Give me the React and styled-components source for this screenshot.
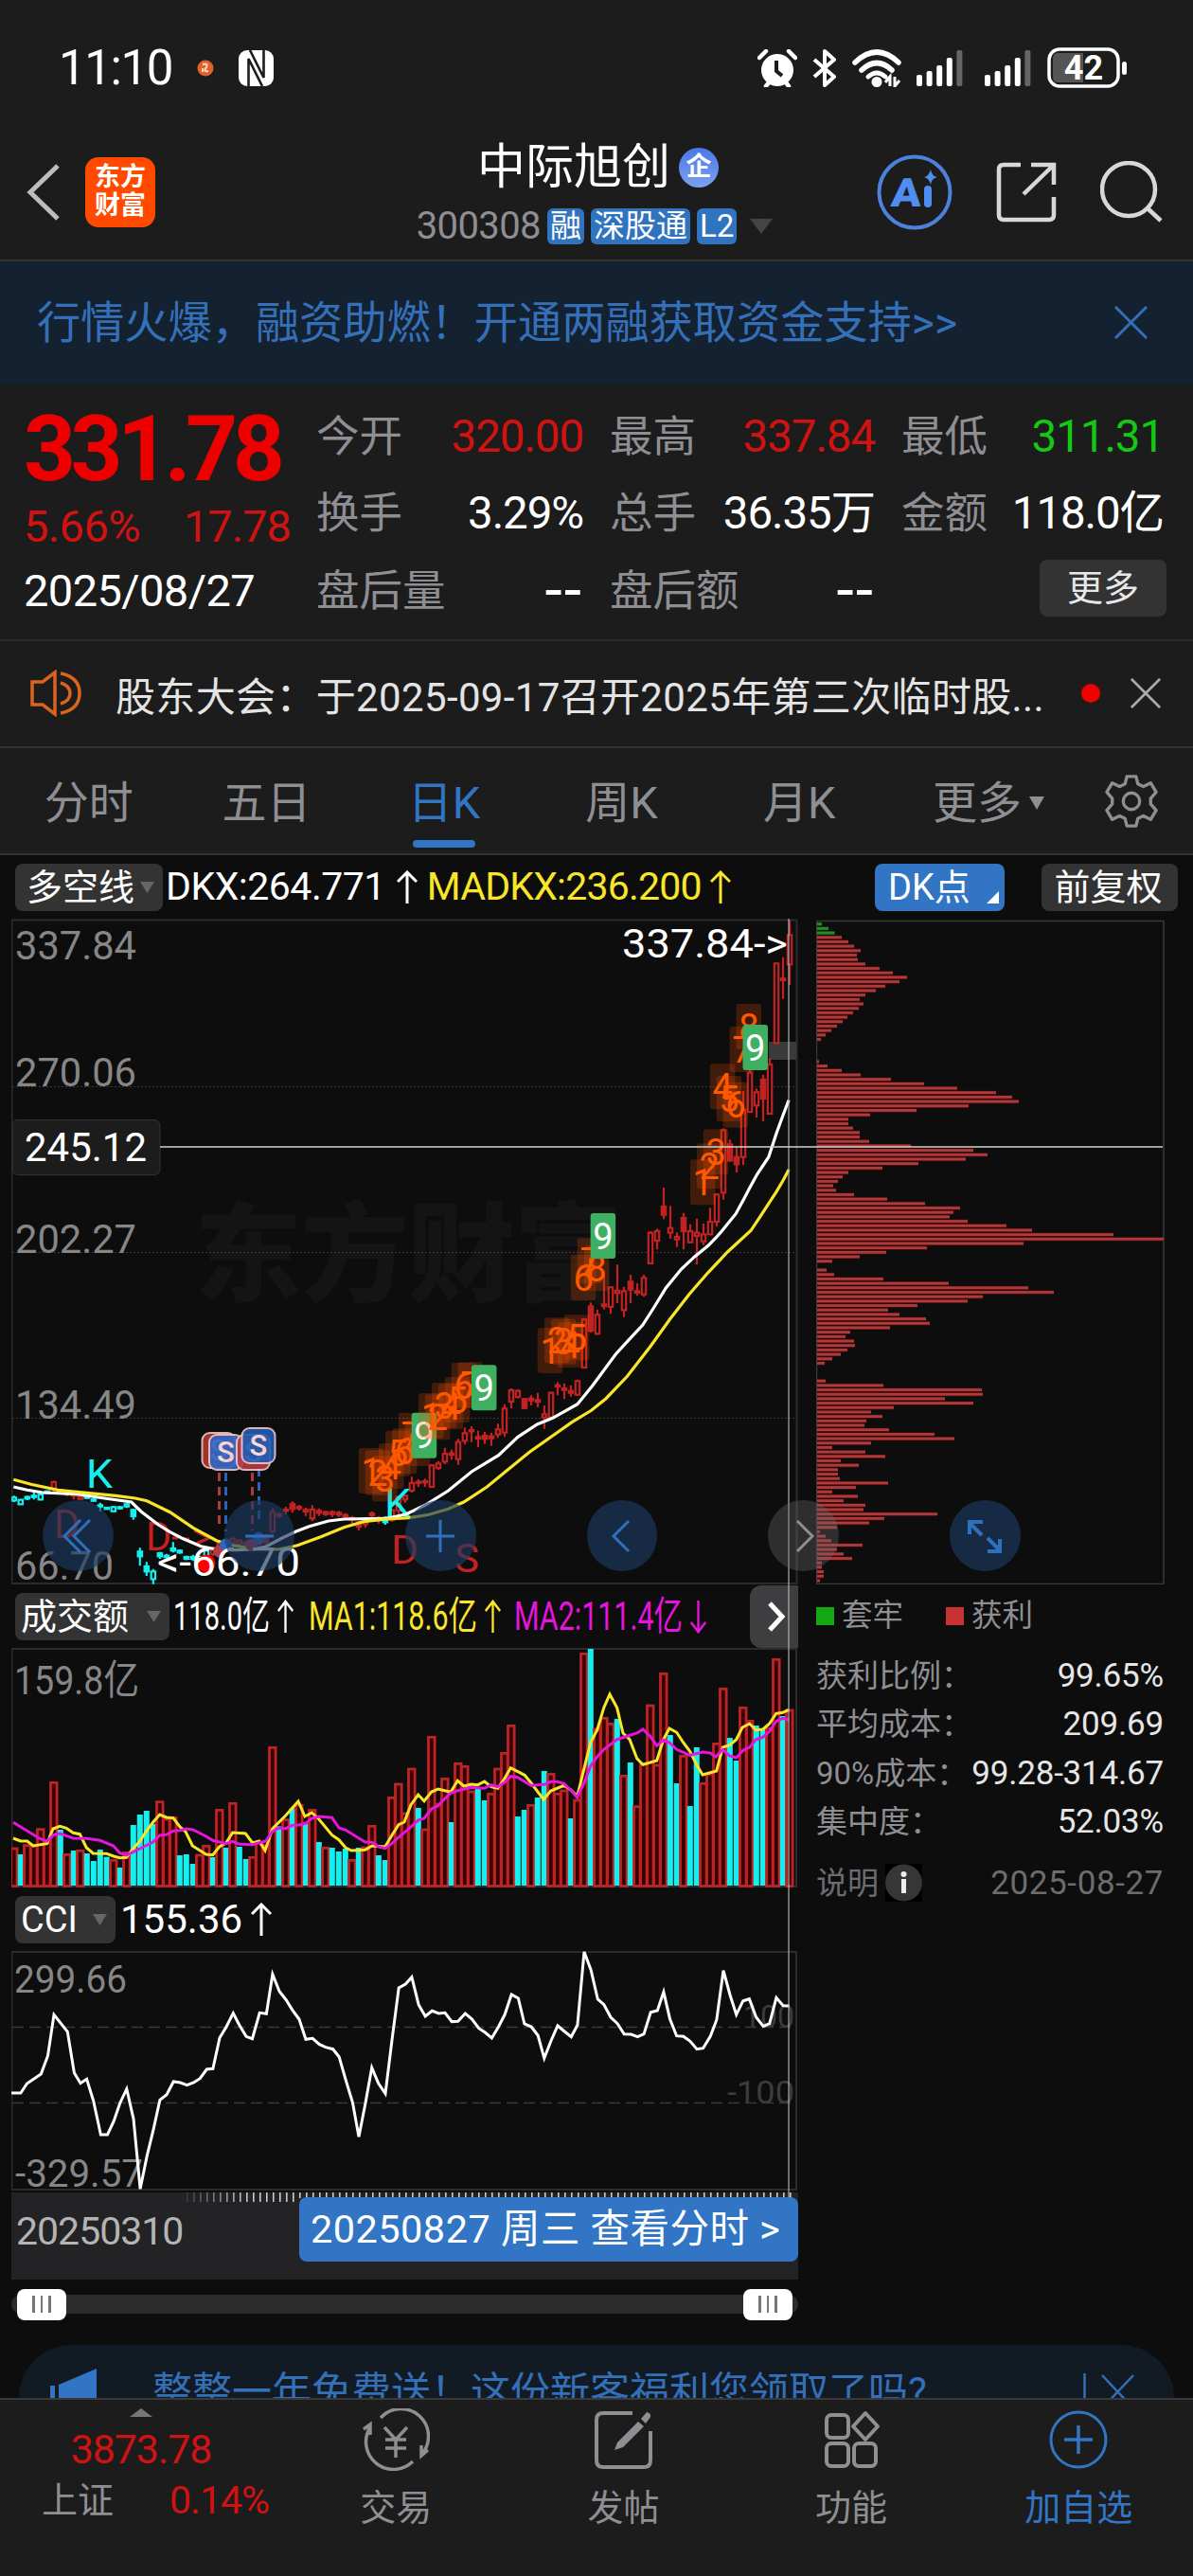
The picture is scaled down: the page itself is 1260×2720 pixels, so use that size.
import React from 'react';
import styled, { createGlobalStyle } from 'styled-components';

const GlobalStyle = createGlobalStyle`
  * { box-sizing: border-box; }
  body {
    margin: 0;
    background: #0d0d0d;
    font-family: Roboto, "Noto Sans CJK SC", sans-serif;
    -webkit-font-smoothing: antialiased;
  }
  svg { display: block; flex: none; }
  svg text { font-family: Roboto, "Noto Sans CJK SC", sans-serif; }
`;

const C = {
  bar: '#1c1c1c', line: '#333335', grey: '#8e8e93', dim: '#868686', red: '#d01212', bright: '#ec0000',
  green: '#14c814', blue: '#3175c4', chip: '#333333', candle: '#c32222', cyan: '#14f0f0',
  yellow: '#fae628', pink: '#e614dc', orange: '#ff5a00',
};

/* ---------- data ---------- */
const chips = [
  5, 12, 18.5, 26, 33, 39, 46, 42, 43, 51, 66, 80, 95, 87, 72, 62, 51, 45, 49, 44, 38, 32, 27, 21, 15, 9, 4, 0, 0, 0, 0,
  2, 11, 26, 46, 78, 113, 148, 189, 206, 213, 160, 105, 56, 33, 33, 38, 45, 45, 55, 99, 165, 180, 157, 107, 69, 33, 27,
  22, 17, 20, 39, 74, 114, 151, 144, 140, 159, 200, 227, 313, 366, 218, 116, 73, 45, 16, 0, 10, 18, 70, 139, 223, 250,
  175, 159, 106, 75, 87, 115, 119, 77, 35, 30, 39, 40, 32, 25, 16, 8, 0, 0, 0, 9, 70, 174, 175, 135, 165, 81, 57, 69,
  52, 50, 76, 124, 145, 57, 16, 51, 72, 25, 44, 22, 22, 24, 75, 41, 16, 43, 28, 51, 49, 127, 71, 55, 21, 3, 9, 15, 48,
  21, 28, 37, 5, 5, 7, 7, 3,
];

const volumes = `R693 C714 R683 R685 R632 R675 R484 C636 R712 C702 R700 C711 C735 C699 C722 R730 C756 R706 C621 C588 C576
C618 R545 R600 R595 C717 C714 C744 R714 R685 C723 R571 C693 R550 C690 C729 R721 R673 R683 R373 C625 R602 C568 R556 C618
R571 C675 R691 C693 C705 C696 R730 C693 R690 R622 C717 C732 R532 R489 R582 R441 C567 R633 R340 R552 R472 C612 R424 R433
R513 C507 C543 R520 R441 R391 R304 C594 C573 R556 C534 C450 R457 R520 R510 C600 R540 R76 C63 R315 R280 R298 C285 R463
C423 R560 R425 R240 R429 R139 C336 C489 R400 C561 C375 R487 R457 R361 R187 C345 C417 R247 R289 C306 C318 R312 R94 C276
R255`.split(/\s+/).map((s) => ({ up: s[0] === 'R', top: 1720 + Number(s.slice(1)) / 3 }));

/* "x,y x,y" text to svg points, with a scale and an origin */
const scale = (text, ox, sx, oy, sy) =>
  text.trim().split(/\s+/).map((p) => {
    const [x, y] = p.split(',').map(Number);
    return `${(ox + x / sx).toFixed(1)},${(oy + y / sy).toFixed(1)}`;
  }).join(' ');

const volMa1 = [
  scale(`42,663 65,672 86,672 105,687 149,680 168,633 190,625 210,631 232,646 253,650 274,693 295,711 338,712 360,720
380,725 401,724 422,695 443,673 464,640 485,612 506,588 527,597 549,599 570,627 588,642 610,687 653,714 674,716 695,690
716,678 737,645 778,648 800,678 821,672 840,702 863,633 905,591 945,546 966,594 988,582 1010,602 1052,653 1074,668
1095,693 1114,702 1157,700 1179,687 1220,690 1241,655 1263,620 1281,612 1302,557`, 0, 3, 1720, 3),
  scale(`35,525 54,545 77,516 98,507 138,517 160,481 180,498 203,492 224,494 245,483 266,500 287,505 308,475 328,440
372,463 392,487 432,540 455,513 497,496 518,510 539,530 560,445 581,360 602,320 623,250 642,207 665,250 684,330 705,350
728,410 747,430 791,417 812,350 831,315 854,328 875,360 896,388 917,430 936,462 980,450 1000,375 1022,368 1043,350
1062,312 1085,300 1105,320 1127,318 1148,300 1169,268 1190,265 1209,256`, 430, 3, 1720, 3),
].join(' ');

const volMa2 = [
  scale(`42,613 86,640 128,665 149,672 170,652 190,648 232,663 275,664 317,670 359,687 380,710 401,717 422,706 443,696
485,675 506,654 527,652 549,640 570,638 591,633 611,636 653,657 674,670 716,680 737,673 759,682 800,683 842,672 863,642
884,630 905,632 926,622 947,621 968,616 988,600 1010,594 1052,598 1074,630 1095,637 1157,675 1179,676 1200,690 1220,695
1241,680 1263,660 1304,625`, 0, 3, 1720, 3),
  scale(`35,606 54,600 77,570 98,560 119,538 138,520 161,512 203,502 245,505 266,494 287,500 308,487 328,467 350,470
392,496 434,493 455,484 476,484 497,490 518,510 538,533 560,490 581,435 602,405 623,382 665,350 728,330 747,318 770,340
791,370 812,352 831,360 854,382 896,400 936,390 960,393 978,405 1000,382 1022,402 1043,408 1064,385 1085,375 1105,350
1127,343 1148,325 1169,293 1190,283 1209,288`, 430, 3, 1720, 3),
].join(' ');

const cci = scale(`22,630 40,630 52,600 79,570 92,512 104,382 130,436 143,566 155,599 167,586 180,655 194,762 207,762
219,720 231,662 244,617 257,712 270,934 283,830 296,742 308,652 321,635 334,594 347,597 360,605 373,597 385,584 398,555
410,553 423,455 436,420 449,377 461,415 474,451 486,458 500,376 513,379 525,254 538,308 551,335 563,367 576,396 589,460
602,457 615,476 627,485 641,491 653,515 666,590 679,660 691,769 704,660 716,550 729,600 742,632 755,460 768,297 781,285
793,263 806,350 819,387 832,370 845,378 857,376 870,404 882,403 896,378 909,396 922,425 934,438 947,456 960,420 972,382
985,318 998,330 1010,411 1023,420 1036,448 1048,520 1061,465 1074,417 1087,435 1100,452 1112,415 1125,183 1138,240
1151,333 1163,350 1176,390 1189,410 1202,443 1215,444 1228,452 1240,443 1253,374 1266,369 1278,310 1290,395 1303,449
1316,451 1329,466 1342,491 1354,488 1368,450 1380,398 1393,242 1406,320 1418,382 1431,338 1443,332 1456,390 1470,419
1482,410 1495,328 1508,353 1520,354`, 0, 1.8233, 2000, 3);

const dkx = [
  scale(`35,810 70,820 110,828 200,833 270,846 340,858 365,888 410,930 440,953 470,972 520,998 560,1008 610,1010 660,1007
690,998 730,972 765,952 800,935 850,918 890,912 1000,910 1050,897 1100,868 1160,822 1220,762 1290,710 1340,652 1390,612
1430,592 1494,548`, 0, 2.45, 1300, 3),
  scale(`700,490 760,390 795,343 830,297 860,240 890,180 930,120 965,80 1000,45 1020,20`, 340, 2.45, 1300, 3),
  scale(`352,1195 385,1145 405,1100 420,1065 440,1020 470,965 490,890 508,830 522,785`, 620, 2.45, 900, 3),
].join(' ');

const madkx = [
  scale(`35,787 80,802 150,820 230,830 300,838 350,846 380,854 440,890 500,940 560,980 600,995 650,1005 720,1008 770,995
830,968 890,938 940,920 1000,912 1060,908 1110,898 1160,880 1200,858 1260,810 1310,760 1370,700 1430,648 1480,605
1530,568`, 0, 2.45, 1300, 3),
  scale(`735,530 790,460 850,365 900,280 950,200 1000,130 1050,65 1110,-2`, 340, 2.45, 1300, 3),
  scale(`450,1150 490,1075 508,1038 522,1005`, 620, 2.45, 900, 3),
].join(' ');

/* colour, high, open, close, low; a leading "s" is a solid body; the last rows use the upper origin */
const lowCandles = `C838,844,853,858 C848,851,865,867 C838,842,847,852 C828,838,842,850 C832,834,850,853 C822,824,829,832
R790,795,815,832 R817,820,823,827 R820,826,834,840 R826,830,838,850 R836,840,848,852 C836,840,845,848 C846,850,854,858
C860,868,872,888 C873,876,880,882 C870,874,887,890 C871,874,878,882 C860,865,872,877 sC880,883,903,914 sC1003,1015,1030,1060
sC1048,1062,1078,1092 C1070,1078,1102,1118 sC1016,1020,1030,1038 C1022,1028,1032,1045 C985,1005,1012,1018
C1008,1012,1018,1022 C1028,1032,1038,1042 sC1025,1032,1038,1045 C1028,1032,1038,1042 C1008,1012,1030,1036
R1000,1010,1022,1030 R985,990,1005,1025 R975,985,995,1005 R968,975,988,1000 R975,980,990,995 R982,987,995,1000
R982,990,998,1005 R968,975,990,1000 sR960,965,985,992 R878,890,950,956 R890,897,902,908 R873,882,886,897
sR856,864,880,892 R868,873,878,885 R875,883,888,902 R868,882,910,918 R878,886,892,902 R885,890,896,902 R884,890,896,905
R886,892,898,906 R893,899,904,912 R902,908,914,928 sR918,922,936,948 sR905,915,928,938 R888,894,900,908 R902,908,916,926
sC903,908,922,930 R880,884,915,920 R838,842,885,898 R834,838,850,860 R778,798,822,828 R786,794,798,810 R784,792,796,810
R738,742,810,812 R728,736,750,756 R686,705,730,738 R692,704,708,724 R658,668,722,740 R622,640,664,676 R618,630,634,668
R632,652,657,684 sR636,648,658,674 R638,650,656,680 R610,628,644,655 R548,562,638,652 R498,504,540,562 R500,506,525,530
sR528,532,560,564 R520,530,536,552 R512,535,540,558 R552,580,590,626 R508,512,590,596 R478,488,492,520 R482,498,503,532
R488,506,512,524 R470,475,518,522 R275,280,432,434 sR226,238,315,322 R248,265,325,328 R130,232,237,248 R176,178,240,262
R106,188,196,228 R176,190,250,272 sR138,160,185,228 R165,190,195,205 R138,148,200,208`.split(/\s+/);
const highCandles = `R1200,1205,1302,1304 R1192,1200,1230,1258 sR1062,1122,1148,1162 R1120,1190,1205,1224 R1204,1218,1226,1250
sR1142,1158,1200,1258 R1178,1200,1235,1238 R1160,1205,1215,1306 R1176,1210,1232,1244 R1126,1170,1210,1212
R1080,1084,1170,1186 R874,880,1078,1100 sR910,925,976,980 sR932,965,988,1014 R756,815,965,990 R690,698,822,826
R748,760,802,840 sR704,720,780,852 R652,672,828,830 R350,352,604,606 R332,400,405,464 R215,262,355,420`.split(/\s+/);

const parseCandle = (text, base) => {
  const solid = text[0] === 's';
  const body = solid ? text.slice(1) : text;
  const [hi, top, bottom, lo] = body.slice(1).split(',').map((v) => base + Number(v) / 3);
  return { solid, up: body[0] === 'R', hi, top, bottom, lo };
};
const candles = [...lowCandles.map((c) => parseCandle(c, 1300)), ...highCandles.map((c) => parseCandle(c, 900))];

const lowMarks = [
  ['1', 928, 687], ['2', 945, 693], ['3', 963, 712], ['4', 980, 672], ['5', 997, 632], ['6', 1014, 625], ['7', 1031, 575],
  ['8', 1048, 600], ['9', 1065, 575], ['1', 1083, 513], ['2', 1100, 517], ['3', 1117, 480], ['4', 1134, 484],
  ['5', 1151, 462], ['6', 1168, 417], ['7', 1185, 415], ['9', 1220, 424],
  ['1', 1391, 306], ['2', 1409, 274], ['3', 1426, 278], ['4', 1443, 288], ['5', 1460, 265],
  ['6', 1477, 75], ['7', 1494, 22], ['8', 1511, 45], ['9', 1528, -57],
].map(([n, x, y]) => ({ n, x: x / 2.45, y: 1300 + y / 3 }));
const highMarks = [
  ['1', 267, 973], ['2', 284, 922], ['3', 301, 877], ['4', 318, 670], ['5', 335, 708], ['6', 352, 728], ['7', 369, 552],
  ['8', 386, 480], ['9', 403, 546],
].map(([n, x, y]) => ({ n, x: 620 + x / 2.45, y: 900 + y / 3 }));

/* ---------- shared parts ---------- */
const Txt = styled.span`
  font-size: ${(p) => p.$s}px;
  color: ${(p) => p.$c || '#fff'};
  font-weight: ${(p) => p.$w || 400};
  letter-spacing: ${(p) => p.$ls || 0}px;
  margin-left: ${(p) => p.$ml || 0}px;
  line-height: 1;
  white-space: nowrap;
`;

const Cross = ({ size = 35, color, w = 3 }) => (
  <svg width={size} height={size} viewBox="0 0 35 35"><path d="M1 1L34 34M34 1L1 34" stroke={color} strokeWidth={w} fill="none" /></svg>
);
const Arrow = ({ color, down, width = 22 }) => (
  <svg width={width} height="36" viewBox="0 0 22 36" preserveAspectRatio="none">
    <path d={down ? 'M11 1V34M1 24L11 34L21 24' : 'M11 35V2M1 12L11 2L21 12'} stroke={color} strokeWidth="3" fill="none" />
  </svg>
);
const Triangle = ({ w = 15, h = 12, color = '#666', up }) => (
  <svg width={w} height={h} viewBox="0 0 10 10" preserveAspectRatio="none"><path d={up ? 'M0 10H10L5 0Z' : 'M0 0H10L5 10Z'} fill={color} /></svg>
);

/* ---------- top ---------- */
const Screen = styled.div`
  width: 1260px;
  height: 2720px;
  overflow: hidden;
  display: flex;
  flex-direction: column;
  background: #0d0d0d;
`;
const StatusBar = styled.div`
  height: 144px;
  padding: 0 68px 0 62px;
  background: ${C.bar};
  display: flex;
  align-items: center;
  justify-content: space-between;
`;
const StatusGroup = styled.div`
  display: flex;
  align-items: center;
  gap: ${(p) => p.$gap}px;
`;
const Header = styled.header`
  height: 132px;
  padding: 0 32px 0 28px;
  background: ${C.bar};
  border-bottom: 2px solid ${C.line};
  display: grid;
  grid-template-columns: 340px 1fr 340px;
  align-items: center;
`;
const HeaderSide = styled.div`
  display: flex;
  align-items: center;
  justify-content: ${(p) => p.$end ? 'flex-end' : 'flex-start'};
  gap: ${(p) => p.$gap}px;
  padding-bottom: 11px;
`;
const Logo = styled.div`
  width: 74px;
  height: 74px;
  border-radius: 14px;
  background: #ff4a00;
  color: #fff;
  font-size: 27px;
  font-weight: 700;
  line-height: 30px;
  text-align: center;
  padding-top: 6px;
`;
const TitleBlock = styled.div`
  display: flex;
  flex-direction: column;
  align-items: center;
  gap: 16px;
  padding-bottom: 12px;
  margin-top: 4px;
`;
const TitleRow = styled.div`
  display: flex;
  align-items: center;
  height: ${(p) => p.$h}px;
  gap: ${(p) => p.$gap}px;
  padding-left: ${(p) => p.$pl || 0}px;
`;
const CompanyBadge = styled.span`
  width: 42px;
  height: 42px;
  border-radius: 50%;
  background: linear-gradient(#4a78e8, #7ba1ef);
  color: #fff;
  font-size: 27px;
  font-weight: 700;
  line-height: 40px;
  text-align: center;
`;
const Tag = styled.span`
  height: 38px;
  padding: 0 3px;
  border-radius: 6px;
  background: #3074bf;
  color: #fff;
  font-size: 33px;
  line-height: 37px;
`;
const Promo = styled.div`
  height: 130px;
  padding: 0 48px 0 39px;
  background: #142130;
  display: flex;
  align-items: center;
  justify-content: space-between;
`;
const Quote = styled.section`
  height: 271px;
  padding: 20px 29px 0 25px;
  background: ${C.bar};
  border-bottom: 2px solid #2a2a2c;
  display: grid;
  grid-template-columns: 309px 1fr;
`;
const PriceCol = styled.div`
  display: flex;
  flex-direction: column;
`;
const PriceLine = styled.div`
  height: ${(p) => p.$h}px;
  width: 282px;
  display: flex;
  align-items: center;
  justify-content: space-between;
`;
const StatGrid = styled.div`
  display: grid;
  grid-template-columns: 282px 280px 277px;
  column-gap: 28px;
  grid-auto-rows: 81.5px;
  margin-top: -5px;
`;
const Stat = styled.div`
  display: flex;
  align-items: center;
  justify-content: ${(p) => p.$end ? 'flex-end' : 'space-between'};
`;
const MoreButton = styled.button`
  width: 134px;
  height: 60px;
  margin: -7px -3px 0 0;
  border: 0;
  border-radius: 8px;
  background: ${C.chip};
  color: #e8e8e8;
  font: 400 38px/56px Roboto, "Noto Sans CJK SC", sans-serif;
  padding: 0;
`;
const News = styled.div`
  height: 114px;
  padding: 0 34px 0 32px;
  background: ${C.bar};
  border-bottom: 2px solid ${C.line};
  display: flex;
  align-items: center;
`;
const NewsText = styled.span`
  flex: 1;
  margin-left: 35px;
  font-size: 42px;
  letter-spacing: 0.35px;
  color: #e4e4e4;
  white-space: nowrap;
`;
const Dot = styled.i`
  width: 20px;
  height: 20px;
  border-radius: 50%;
  background: #f00000;
  margin-right: 32px;
`;
const Tabs = styled.nav`
  height: 113px;
  background: ${C.bar};
  border-bottom: 2px solid ${C.line};
  display: flex;
`;
const Tab = styled.div`
  width: ${(p) => p.$w || 187.6}px;
  padding-top: 6px;
  display: flex;
  flex-direction: column;
  align-items: center;
  font-size: 47px;
  line-height: 104px;
  color: ${(p) => p.$on ? C.blue : C.grey};
  &::after {
    content: '';
    width: 66px;
    height: 8px;
    margin-top: -13px;
    border-radius: 4px;
    background: ${(p) => p.$on ? C.blue : 'transparent'};
  }
`;
const TabLabel = styled.div`
  display: flex;
  align-items: center;
  gap: 8px;
  height: 104px;
`;
const GearCell = styled.div`
  flex: 1;
  display: flex;
  align-items: center;
  justify-content: center;
  padding-right: 20px;
`;

/* ---------- charts ---------- */
const ChartArea = styled.main`
  position: relative;
  height: 1630px;
  display: flex;
  flex-direction: column;
`;
const Indicators = styled.div`
  height: 67px;
  padding: 0 16px;
  display: flex;
  align-items: center;
`;
const Chip = styled.div`
  width: ${(p) => p.$w}px;
  height: 50px;
  padding: 0 9px 0 ${(p) => p.$pl || 6}px;
  border-radius: 8px;
  background: ${(p) => p.$bg || C.chip};
  color: #fff;
  font-size: 38px;
  line-height: 48px;
  display: flex;
  align-items: center;
  justify-content: ${(p) => p.$mid ? 'center' : 'space-between'};
  margin-left: ${(p) => p.$ml || 0}px;
  white-space: nowrap;
`;
const IndicatorValue = styled.div`
  display: flex;
  align-items: center;
  gap: ${(p) => p.$gap || 12}px;
  margin-left: ${(p) => p.$ml}px;
`;
const Spacer = styled.div`flex: 1;`;
const Corner = styled.svg`align-self: flex-end; margin: 0 -3px 8px 0;`;
const Columns = styled.div`
  display: grid;
  grid-template-columns: 831px 367px;
  column-gap: 19px;
  padding-left: 12px;
`;
const Column = styled.div`
  display: flex;
  flex-direction: column;
`;
const SubHeader = styled.div`
  height: ${(p) => p.$h}px;
  padding-left: ${(p) => p.$pl}px;
  display: flex;
  align-items: center;
`;
const Squeeze = styled.div`
  width: ${(p) => p.$w}px;
  margin-left: ${(p) => p.$ml}px;
  display: flex;
  align-items: center;
`;
const NextButton = styled.div`
  width: 51px;
  height: 66px;
  margin-left: auto;
  border-radius: 12px 0 0 12px;
  background: #3e3e40;
  display: flex;
  align-items: center;
  justify-content: center;
  padding-left: 4px;
`;
const DateBar = styled.div`
  height: 92px;
  margin-top: 2px;
  background: #232326;
  display: flex;
  flex-direction: column;
`;
const DateRow = styled.div`
  display: flex;
  justify-content: space-between;
  align-items: center;
  padding-left: 5px;
`;
const DateButton = styled.div`
  width: 527px;
  height: 68px;
  margin-top: -5px;
  border-radius: 8px;
  background: ${C.blue};
  color: #fff;
  font-size: 41.5px;
  line-height: 67px;
  letter-spacing: 0.45px;
  padding-left: 12px;
  white-space: pre;
`;
const Slider = styled.div`
  height: 20px;
  margin-top: 16px;
  border-radius: 10px;
  background: #2c2c2e;
  display: flex;
  align-items: center;
  justify-content: space-between;
  padding: 0 6px;
`;
const Handle = styled.div`
  width: 52px;
  height: 33px;
  border-radius: 8px;
  background: #fff;
  display: flex;
  align-items: center;
  justify-content: center;
  gap: 6px;
  i { width: 2.5px; height: 18px; background: #777; }
`;
const Legend = styled.div`
  height: 66px;
  margin-bottom: 4px;
  display: flex;
  align-items: center;
`;
const Swatch = styled.i`
  width: 19px;
  height: 19px;
  background: ${(p) => p.$c};
  margin: 0 8px 0 ${(p) => p.$ml || 0}px;
`;
const InfoRow = styled.div`
  height: 51.5px;
  margin-top: ${(p) => p.$mt || 0}px;
  display: flex;
  align-items: center;
  justify-content: space-between;
`;
const InfoGroup = styled.div`
  display: flex;
  align-items: center;
  gap: 7px;
`;
const CrossV = styled.div`
  position: absolute;
  left: 832px;
  top: 67px;
  width: 2px;
  height: 1350px;
  background: rgba(190, 190, 190, 0.55);
`;
const CrossH = styled.div`
  position: absolute;
  left: 169px;
  top: 307px;
  width: 1059px;
  height: 1.5px;
  background: rgba(210, 210, 210, 0.75);
`;
const Controls = styled.div`
  position: absolute;
  left: 45px;
  top: 681px;
  display: flex;
  gap: 117px;
`;
const RoundButton = styled.div`
  width: 74.6px;
  height: 74.6px;
  border-radius: 50%;
  background: ${(p) => p.$off ? 'rgba(110,110,110,0.35)' : 'rgba(28,58,95,0.66)'};
  display: flex;
  align-items: center;
  justify-content: center;
`;
const Offer = styled.div`
  position: absolute;
  left: 20px;
  right: 20px;
  top: 1573px;
  height: 100px;
  border-radius: 56px 56px 0 0;
  background: #121a23;
  padding: 0 41px 0 32px;
  display: flex;
  align-items: center;
`;

/* ---------- bottom ---------- */
const BottomBar = styled.footer`
  position: relative;
  height: 188px;
  border-top: 2px solid #3a3a3c;
  background: ${C.bar};
  display: flex;
`;
const IndexCell = styled.div`
  width: 298px;
  padding-top: 9px;
  display: flex;
  flex-direction: column;
  align-items: center;
`;
const IndexRow = styled.div`
  width: 298px;
  height: 54px;
  margin-top: ${(p) => p.$mt || 0}px;
  padding: ${(p) => p.$mid ? '0' : '0 14px 0 44px'};
  display: flex;
  align-items: center;
  justify-content: ${(p) => p.$mid ? 'center' : 'space-between'};
`;
const NavItem = styled.div`
  width: 240.4px;
  padding-top: 9px;
  display: flex;
  flex-direction: column;
  align-items: center;
  gap: 20px;
`;

/* ---------- drawings ---------- */
const Signal = () => (
  <svg width="50" height="40" viewBox="0 0 50 40">
    {[0, 1, 2, 3, 4].map((i) => <rect key={i} x={i * 10.6} y={[27, 23, 17, 9, 1][i]} width="6" height={[12, 16, 22, 30, 38][i]} rx="2" fill={i === 4 ? '#666' : '#fff'} />)}
  </svg>
);

const Ax = ({ x, y, w, children, fill = C.dim, size = 43, anchor }) => (
  <text x={x} y={y} fontSize={size} fill={fill} textLength={w} lengthAdjust="spacingAndGlyphs" textAnchor={anchor}>{children}</text>
);

const Badge = ({ x, y, fill }) => (
  <g opacity="0.9">
    <rect x={x} y={y} width="35" height="37" rx="8" fill={fill} stroke="#f0c8c8" strokeWidth="2" />
    <text x={x + 17.5} y={y + 29} fontSize="31" fontWeight="500" fill="#ffe0e0" textAnchor="middle">S</text>
  </g>
);

const Marks = ({ list }) => list.map((m, i) => (
  <g key={i}>
    <rect x={m.x} y={m.y} width="26.5" height="48" rx="3" fill={m.n === '9' ? '#3faf61' : 'rgba(255,80,0,0.22)'} />
    <text x={m.x + 13.3} y={m.y + 37.5} fontSize="38" fill={m.n === '9' ? '#fff' : C.orange} textAnchor="middle">{m.n}</text>
  </g>
));

const PriceChart = () => (
  <svg width="831" height="703" viewBox="12 970 831 703">
    <text x="205" y="1365" fontSize="114" fontWeight="900" fill="#141414" textLength="452">东方财富</text>
    <g stroke="#3a3a3a" strokeDasharray="2 2">
      <path d="M13 1147.5H841M13 1322.5H841M13 1497.5H841" />
    </g>
    <path d="M12.5 1672V971.5H841.5V1672Z" fill="none" stroke="#2c2c2e" strokeWidth="2" />
    <Ax x={16} y={1013} w={128}>337.84</Ax>
    <Ax x={16} y={1147} w={128}>270.06</Ax>
    <Ax x={16} y={1323} w={128}>202.27</Ax>
    <Ax x={16} y={1498} w={128}>134.49</Ax>
    <Ax x={16} y={1668} w={104}>66.70</Ax>
    <rect x="13" y="1182.500" width="156" height="58" rx="6" fill="#1c1c1d" stroke="#333" />
    <Ax x={26} y={1226} w={129} fill="#fff">245.12</Ax>
    <rect x="812" y="1100" width="29" height="19" fill="#3a3a3a" />
    {candles.map((c, i) => {
      const x = 14.8 + i * 7.002;
      const color = c.up ? C.candle : C.cyan;
      return (
        <g key={i} stroke={color} strokeWidth="2.200">
          <path d={`M${x} ${c.hi}V${c.top}M${x} ${c.bottom}V${c.lo}`} />
          <rect x={x - 2.2} y={c.top} width="4.4" height={Math.max(c.bottom - c.top, 1)} fill={c.solid ? color : '#0d0d0d'} />
        </g>
      );
    })}
    <Ax x={57} y={1624} w={27} fill={C.candle}>D</Ax>
    <Ax x={154} y={1637} w={27} fill={C.candle}>D</Ax>
    <path d="M182 1624H188M193 1625H200M205 1616L221 1624L207 1630" stroke={C.candle} strokeWidth="3" fill="none" />
    <Ax x={91} y={1571} w={28} fill={C.cyan}>K</Ax>
    <Ax x={406} y={1602} w={28} fill={C.cyan}>K</Ax>
    <Ax x={413} y={1651} w={29} fill={C.candle}>D</Ax>
    <Ax x={480} y={1660} w={26} fill={C.candle}>S</Ax>
    <Marks list={lowMarks} />
    <Marks list={highMarks} />
    <polyline points={dkx} fill="none" stroke="#fff" strokeWidth="3.200" />
    <polyline points={madkx} fill="none" stroke={C.yellow} strokeWidth="3.200" />
    <g strokeWidth="3" strokeDasharray="9 6">
      <path d="M231.500 1555V1613M266.500 1555V1616" stroke="#b03a3a" />
      <path d="M238.500 1555V1617M273.500 1550V1608" stroke="#2b62b8" />
    </g>
    <Badge x={213.500} y={1513} fill="#b03a30" />
    <Badge x={221} y={1515} fill="#2f66c4" />
    <Badge x={250} y={1515} fill="#b83a44" />
    <Badge x={255.500} y={1508} fill="#1f5cb4" />
    <circle cx="218" cy="1651" r="9.500" fill="#f00" />
    <circle cx="231.500" cy="1638" r="6.500" fill="#b43a44" />
    <circle cx="238.500" cy="1631" r="6.500" fill="#2f66c4" />
    <circle cx="265.500" cy="1631" r="6.500" fill="#b43a44" />
    <circle cx="273" cy="1624" r="6.500" fill="#2f66c4" />
    <Ax x={166} y={1664} w={151} fill="#fff">&lt;-66.70</Ax>
    <Ax x={657} y={1011} w={175} fill="#fff">337.84-&gt;</Ax>
  </svg>
);

const ChipChart = () => (
  <svg width="368" height="703" viewBox="861 970 368 703">
    <path d="M861.500 972.500H1228V1672.500H861.500Z" fill="none" stroke="#3a3a3c" strokeWidth="1.500" />
    {chips.map((w, i) => w > 0 && (
      <g key={i}>
        <rect x="862" y={973.8 + i * 4.684} width={w} height="4" fill={i < 3 ? '#103c10' : '#5c0c0c'} />
        <rect x="862" y={974.3 + i * 4.684} width={w} height="2.800" fill={i < 3 ? '#249024' : '#ad3b3b'} />
      </g>
    ))}
  </svg>
);

const VolumeChart = () => (
  <svg width="831" height="253" viewBox="12 1740 831 253">
    <path d="M12.500 1992V1741H841V1992Z" fill="none" stroke="#2c2c2e" strokeWidth="2" />
    <Ax x={15} y={1789} w={132}>159.8亿</Ax>
    {volumes.map((v, i) => {
      const x = 14.8 + i * 7;
      return v.up
        ? <rect key={i} x={x - 3.3} y={v.top + 1} width="6.600" height={1990.5 - v.top} fill="#380000" stroke="#bb2525" strokeWidth="2.800" />
        : <rect key={i} x={x - 3} y={v.top} width="6" height={1991 - v.top} fill="#14f0f0" />;
    })}
    <polyline points={volMa1} fill="none" stroke={C.yellow} strokeWidth="3" />
    <polyline points={volMa2} fill="none" stroke={C.pink} strokeWidth="3" />
  </svg>
);

const CciChart = () => (
  <svg width="831" height="253" viewBox="12 2060 831 253">
    <path d="M12.500 2312V2061H841V2312Z" fill="none" stroke="#2c2c2e" strokeWidth="2" />
    <path d="M13 2140.500H835M13 2220.500H835" stroke="#383838" strokeWidth="1.500" strokeDasharray="12 6" />
    <Ax x={15} y={2104} w={119} size={40}>299.66</Ax>
    <Ax x={16} y={2308.5} w={135} size={40}>-329.57</Ax>
    <Ax x={839} y={2141} w={54} size={34} fill="#3c3c3c" anchor="end">100</Ax>
    <Ax x={839} y={2221} w={71} size={34} fill="#3c3c3c" anchor="end">-100</Ax>
    <polyline points={cci} fill="none" stroke="#fff" strokeWidth="3" />
  </svg>
);

const Ticks = () => (
  <svg width="831" height="10" viewBox="12 2315 831 10" overflow="visible">
    {Array.from({ length: 92 }, (_, i) => (
      <rect key={i} x={197 + i * 7} y="2315" width="1.600" height={i < 17 ? 10 : 6} fill="#ddd" opacity={Math.min(0.15 + i * 0.08, 0.9)} />
    ))}
  </svg>
);

export default function App() {
  return (
    <>
      <GlobalStyle />
      <Screen>
        <StatusBar>
          <StatusGroup $gap={26}>
            <Txt $s={51} $ls={-1.4}>11:10</Txt>
            <svg width="18" height="18" viewBox="0 0 18 18"><circle cx="9" cy="9" r="8.500" fill="#e0622a" /><path d="M6 5Q12 3 10 8Q6 13 12 12M6 9V13" stroke="#ffd9c4" strokeWidth="2" fill="none" /></svg>
            <svg width="37" height="38" viewBox="0 0 37 38">
              <rect width="37" height="38" rx="9" fill="#fff" />
              <path d="M10.500 38V9L25 38M26.500 0V29L12 0" stroke={C.bar} strokeWidth="2.600" fill="none" />
            </svg>
          </StatusGroup>
          <StatusGroup $gap={16}>
            <svg width="42" height="40" viewBox="0 0 42 40">
              <circle cx="21" cy="22" r="17" fill="#fff" /><path d="M2 9L9 2M40 9L33 2M9 39L13 34M33 39L29 34" stroke="#fff" strokeWidth="4.500" strokeLinecap="round" /><path d="M20 12V23L26 28" stroke={C.bar} strokeWidth="4" fill="none" />
            </svg>
            <svg width="26" height="40" viewBox="0 0 26 40"><path d="M2 11L23 29L13 38V2L23 11L2 29" fill="none" stroke="#fff" strokeWidth="4" strokeLinejoin="round" /></svg>
            <svg width="52" height="40" viewBox="0 0 52 40">
              <path d="M3 14Q26 -8 49 14M10 22Q26 7 42 22" fill="none" stroke="#fff" strokeWidth="5.500" strokeLinecap="round" /><path d="M17 29Q26 21 35 29" fill="none" stroke="#fff" strokeWidth="5" strokeLinecap="round" /><circle cx="26" cy="34.500" r="5.500" fill="#fff" /><path d="M40 39V29L35 35M45 29V39L50 33" fill="none" stroke="#fff" strokeWidth="3" />
            </svg>
            <StatusGroup $gap={22}><Signal /><Signal /></StatusGroup>
            <svg width="86" height="44" viewBox="0 0 86 44">
              <rect x="2" y="2" width="73" height="39" rx="11" fill="none" stroke="#fff" strokeWidth="3.500" />
              <path d="M11 6H38V37H11Q6 37 6 31V12Q6 6 11 6Z" fill="#555" /><rect x="79" y="15" width="5" height="14" rx="2.500" fill="#fff" />
              <text x="38.500" y="34" fontSize="36" fontWeight="700" fill="#fff" textAnchor="middle">42</text>
            </svg>
          </StatusGroup>
        </StatusBar>

        <Header>
          <HeaderSide $gap={27}>
            <svg width="35" height="60" viewBox="0 0 35 60"><path d="M33 2L4 30L33 58" fill="none" stroke="#bdbdbd" strokeWidth="5" /></svg>
            <Logo>东方<br />财富</Logo>
          </HeaderSide>
          <TitleBlock>
            <TitleRow $h={52} $gap={9} $pl={7}>
              <Txt $s={51}>中际旭创</Txt>
              <CompanyBadge>企</CompanyBadge>
            </TitleRow>
            <TitleRow $h={40} $gap={7}>
              <Txt $s={40} $c={C.grey} $ls={-0.6}>300308</Txt>
              <Tag>融</Tag><Tag>深股通</Tag><Tag>L2</Tag>
              <Spacer />
              <Triangle w={24} h={16} color="#444" />
            </TitleRow>
          </TitleBlock>
          <HeaderSide $end $gap={46}>
            <svg width="80" height="80" viewBox="0 0 80 80">
              <circle cx="40" cy="40" r="37.500" fill="none" stroke="#4c82dc" strokeWidth="4" />
              <text x="15" y="55" fontSize="42" fontWeight="900" fill="#4f8df0" textLength="32" lengthAdjust="spacingAndGlyphs" transform="skewX(-4) translate(3 0)">A</text>
              <path d="M54 37V52" stroke="#4f8df0" strokeWidth="8" strokeLinecap="round" /><path d="M57 16Q58 23 64 24Q58 25 57 32Q55 25 50 24Q55 23 57 16Z" fill="#4f8df0" />
            </svg>
            <svg width="64" height="64" viewBox="0 0 64 64"><path d="M26 3H8Q3 3 3 8V56Q3 61 8 61H56Q61 61 61 56V37M37 3H61V24M61 3L29 34" fill="none" stroke="#d8d8d8" strokeWidth="4.500" /></svg>
            <svg width="66" height="66" viewBox="0 0 66 66"><circle cx="30" cy="30" r="28" fill="none" stroke="#d8d8d8" strokeWidth="4.500" /><path d="M50 50L64 63" stroke="#d8d8d8" strokeWidth="4.500" /></svg>
          </HeaderSide>
        </Header>

        <Promo>
          <Txt $s={46.2} $c="#3470b8">行情火爆，融资助燃！开通两融获取资金支持&gt;&gt;</Txt>
          <Cross color="#3470b8" />
        </Promo>

        <Quote>
          <PriceCol>
            <PriceLine $h={96}><Txt $s={96} $w={700} $c={C.bright} $ls={-5.5}>331.78</Txt></PriceLine>
            <PriceLine $h={68}><Txt $s={47} $c={C.red} $ls={-0.6}>5.66%</Txt><Txt $s={47} $c={C.red} $ls={-1}>17.78</Txt></PriceLine>
            <PriceLine $h={68}><Txt $s={47} $ls={-0.6}>2025/08/27</Txt></PriceLine>
          </PriceCol>
          <StatGrid>
            {[
              ['今开', '320.00', C.red], ['最高', '337.84', C.red], ['最低', '311.31', C.green],
              ['换手', '3.29%'], ['总手', '36.35万'], ['金额', '118.0亿'],
              ['盘后量', '--'], ['盘后额', '--'],
            ].map(([label, value, color]) => (
              <Stat key={label}>
                <Txt $s={45.5} $c={C.grey}>{label}</Txt>
                <Txt $s={value === '--' ? 66 : 47.5} $c={color} $ls={value === '--' ? 2 : -1.1}>{value}</Txt>
              </Stat>
            ))}
            <Stat $end><MoreButton>更多</MoreButton></Stat>
          </StatGrid>
        </Quote>

        <News>
          <svg width="55" height="50" viewBox="0 0 55 50"><path d="M2 13H13L26 3V47L13 37H2ZM32 4Q52 8 52 25Q52 42 32 46M32 14Q42 17 42 25Q42 33 32 36" fill="none" stroke="#d8641e" strokeWidth="3.500" /></svg>
          <NewsText>股东大会：于2025-09-17召开2025年第三次临时股...</NewsText>
          <Dot />
          <Cross size={32} color="#aaa" />
        </News>

        <Tabs>
          <Tab>分时</Tab><Tab>五日</Tab><Tab $on>日K</Tab><Tab>周K</Tab><Tab>月K</Tab>
          <Tab $w={212}><TabLabel>更多<Triangle w={16} h={14} color={C.grey} /></TabLabel></Tab>
          <GearCell>
            <svg width="56" height="56" viewBox="0 0 58 58">
              <path d="M24 2H34L36 10L42 13L50 9L56 19L50 26V32L56 39L50 49L42 45L36 48L34 56H24L22 48L16 45L8 49L2 39L8 32V26L2 19L8 9L16 13L22 10Z" fill="none" stroke={C.grey} strokeWidth="3.500" strokeLinejoin="round" />
              <circle cx="29" cy="29" r="9" fill="none" stroke={C.grey} strokeWidth="3.500" />
            </svg>
          </GearCell>
        </Tabs>

        <ChartArea>
          <Indicators>
            <Chip $w={156} $pl={12}>多空线<Triangle /></Chip>
            <IndicatorValue $ml={3}><Txt $s={41} $ls={-0.5}>DKX:264.771</Txt><Arrow color="#fff" /></IndicatorValue>
            <IndicatorValue $ml={10} $gap={9}><Txt $s={41} $c={C.yellow} $ls={-0.8}>MADKX:236.200</Txt><Arrow color={C.yellow} /></IndicatorValue>
            <Spacer />
            <Chip $w={137} $bg={C.blue} $pl={14}>DK点<Corner width="13" height="13" viewBox="0 0 13 13"><path d="M13 0V13H0Z" fill="#fff" /></Corner></Chip>
            <Chip $w={144} $mid $ml={39}>前复权</Chip>
          </Indicators>

          <Columns>
            <Column>
              <PriceChart />
              <SubHeader $h={67} $pl={4}>
                <Chip $w={163}>成交额<Triangle /></Chip>
                {[['118.0亿', '#fff', 128, 98, 4], ['MA1:118.6亿', C.yellow, 202, 174, 15], ['MA2:111.4亿', C.pink, 200, 174, 15]].map(([t, c, w, tw, ml]) => (
                  <Squeeze key={t} $w={w} $ml={ml}>
                    <svg width={tw + 12} height="50" viewBox={`0 0 ${tw + 12} 50`}><text x="0" y="39" fontSize="42" fill={c} textLength={tw + 4} lengthAdjust="spacingAndGlyphs">{t}</text></svg>
                    <Arrow color={c} down={c === C.pink} width={17} />
                  </Squeeze>
                ))}
                <NextButton><svg width="18" height="32" viewBox="0 0 18 32"><path d="M2 2L15 16L2 30" fill="none" stroke="#fff" strokeWidth="5" /></svg></NextButton>
              </SubHeader>
              <VolumeChart />
              <SubHeader $h={67} $pl={4}>
                <Chip $w={106}>CCI<Triangle /></Chip>
                <IndicatorValue $ml={5} $gap={9}><Txt $s={42}>155.36</Txt><Arrow color="#fff" /></IndicatorValue>
              </SubHeader>
              <CciChart />
              <DateBar>
                <Ticks />
                <DateRow><Txt $s={41} $c="#b4b4b4" $ls={-1}>20250310</Txt><DateButton>20250827 周三 查看分时 &gt;</DateButton></DateRow>
              </DateBar>
              <Slider><Handle><i /><i /><i /></Handle><Handle><i /><i /><i /></Handle></Slider>
            </Column>
            <Column>
              <ChipChart />
              <Legend>
                <Swatch $c="#14a814" /><Txt $s={32.5} $c={C.grey}>套牢</Txt>
                <Swatch $c="#c83232" $ml={45} /><Txt $s={32.5} $c={C.grey}>获利</Txt>
              </Legend>
              {[['获利比例：', '99.65%'], ['平均成本：', '209.69'], ['90%成本：', '99.28-314.67'], ['集中度：', '52.03%']].map(([k, v]) => (
                <InfoRow key={k}><Txt $s={33} $c={C.grey}>{k}</Txt><Txt $s={35} $c="#e6e6e6" $ls={-0.2}>{v}</Txt></InfoRow>
              ))}
              <InfoRow $mt={13}>
                <InfoGroup>
                  <Txt $s={33} $c="#6c6c70">说明</Txt>
                  <svg width="39" height="40" viewBox="0 0 39 40"><rect width="39" height="40" fill="#000" /><circle cx="19.500" cy="20" r="19.500" fill="#363636" /><path d="M19.500 16V31" stroke="#eee" strokeWidth="5" /><circle cx="19.500" cy="11" r="3" fill="#eee" /></svg>
                </InfoGroup>
                <Txt $s={35} $c="#6c6c70" $ls={0.6}>2025-08-27</Txt>
              </InfoRow>
            </Column>
          </Columns>

          <CrossV /><CrossH />
          <Controls>
            {['M20 0L3 17L20 34M30 0L13 17L30 34', 'M2 17H32', 'M2 17H32M17 0V34', 'M24 1L8 17L24 33', 'M10 1L26 17L10 33', 'M14 16L1 3M1 15V2H15M20 19L33 32M33 20V33H20'].map((d, i) => (
              <RoundButton key={d} $off={i === 4}>
                <svg width="36" height="36" viewBox="-1 -1 36 36"><path d={d} fill="none" stroke={i === 4 ? '#8e8e93' : '#2f70bc'} strokeWidth={i === 5 ? 4 : 3} /></svg>
              </RoundButton>
            ))}
          </Controls>
          <Offer>
            <svg width="52" height="50" viewBox="0 0 52 50"><path d="M1 18H6V50H1ZM10 17L50 0V50H10Z" fill={C.blue} /></svg>
            <Txt $s={42} $c="#3470b8" $ml={57}>整整一年免费送！这份新客福利您领取了吗?</Txt>
            <Spacer />
            <svg width="55" height="40" viewBox="0 0 55 40"><path d="M1.500 0V40M20 2L53 37M53 2L20 37" stroke="#3470b8" strokeWidth="2.500" /></svg>
          </Offer>
        </ChartArea>

        <BottomBar>
          <IndexCell>
            <Triangle w={24} h={9} color="#777" up />
            <IndexRow $mt={7} $mid><Txt $s={43} $c={C.red} $ls={-1.1}>3873.78</Txt></IndexRow>
            <IndexRow><Txt $s={38} $c={C.grey}>上证</Txt><Txt $s={41} $c={C.red} $ls={-1}>0.14%</Txt></IndexRow>
          </IndexCell>
          <NavItem>
            <svg width="72" height="66" viewBox="0 0 72 66"><path d="M20 10A29 29 0 0 1 63 49M54 56A29 29 0 0 1 9 20M2 22L9 17V28M70 44L63 50V39M24 20L36 33L48 20M25 33H47M25 42H47M36 33V52" fill="none" stroke={C.grey} strokeWidth="3.500" /></svg>
            <Txt $s={38} $c={C.grey}>交易</Txt>
          </NavItem>
          <NavItem>
            <svg width="66" height="66" viewBox="0 0 66 66"><path d="M42 5H11Q4 5 4 12V55Q4 62 11 62H54Q61 62 61 55V24" fill="none" stroke={C.grey} strokeWidth="4" /><path d="M48 14L54 19L32 41L23 44L26 36ZM51 11L57 4Q62 5 61 9L56 16Z" fill={C.grey} /></svg>
            <Txt $s={38} $c={C.grey}>发帖</Txt>
          </NavItem>
          <NavItem>
            <svg width="62" height="66" viewBox="0 0 62 66"><g fill="none" stroke={C.grey} strokeWidth="4"><rect x="5" y="7" width="23" height="24" rx="5" /><rect x="5" y="37" width="23" height="24" rx="5" /><rect x="34" y="37" width="23" height="24" rx="5" /><path d="M46 5L59 19L46 33L33 19Z" strokeLinejoin="round" /></g></svg>
            <Txt $s={38} $c={C.grey}>功能</Txt>
          </NavItem>
          <NavItem>
            <svg width="66" height="66" viewBox="0 0 66 66"><circle cx="33" cy="33" r="29" fill="none" stroke={C.blue} strokeWidth="3" /><path d="M18 33H48M33 18V48" stroke={C.blue} strokeWidth="3.500" /></svg>
            <Txt $s={38} $c={C.blue}>加自选</Txt>
          </NavItem>
        </BottomBar>
      </Screen>
    </>
  );
}
